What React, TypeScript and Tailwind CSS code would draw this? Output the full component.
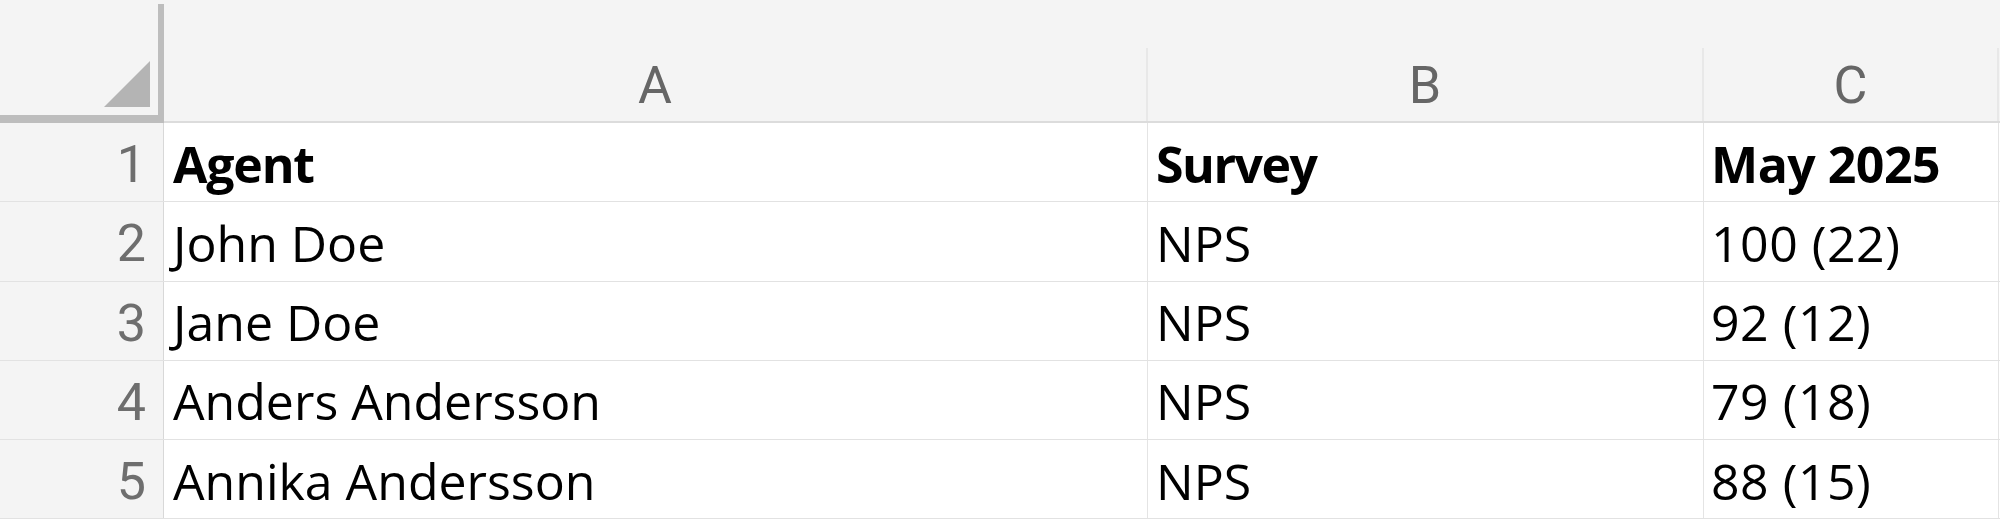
import React from "react";

const rows: [string, string, string, string][] = [
  ["1", "Agent", "Survey", "May 2025"],
  ["2", "John Doe", "NPS", "100 (22)"],
  ["3", "Jane Doe", "NPS", "92 (12)"],
  ["4", "Anders Andersson", "NPS", "79 (18)"],
  ["5", "Annika Andersson", "NPS", "88 (15)"],
];

const cellFont = { fontFamily: "'Open Sans', 'Noto Sans', sans-serif" };
const hdrFont = { fontFamily: "Roboto, 'Noto Sans', sans-serif" };

function ColHeader({ label, w }: { label: string; w: string }) {
  return (
    <div className={`${w} h-full flex flex-col border-b-2 border-[#dcdcdc]`}>
      <div className="h-[48px]" />
      <div
        className="flex-1 flex items-center justify-center border-r-2 border-[#e8e8e8] text-[52px] text-[#666666] leading-none pt-[2px]"
        style={hdrFont}
      >
        {label}
      </div>
    </div>
  );
}

export default function App() {
  return (
    <div className="w-[2000px] h-[521px] bg-white overflow-hidden">
      <div className="flex h-[123px] bg-[#f4f4f4]">
        <div className="w-[164px] h-full pt-[4px]">
          <div className="h-full border-r-[6px] border-b-[8px] border-[#bdbdbd] flex items-end justify-end p-[8px]">
            <svg width="46" height="46" viewBox="0 0 46 46">
              <polygon points="46,0 46,46 0,46" fill="#b4b4b4" />
            </svg>
          </div>
        </div>
        <ColHeader label="A" w="w-[984px]" />
        <ColHeader label="B" w="w-[556px]" />
        <ColHeader label="C" w="w-[295px]" />
        <div className="flex-1 h-full border-b-2 border-[#dcdcdc]" />
      </div>
      {rows.map((r, i) => (
        <div key={i} className="flex h-[79.25px] border-b border-[#e2e2e2]">
          <div
            className="w-[164px] h-full bg-[#f4f4f4] border-r border-[#d8d8d8] flex items-center justify-end pr-[17px] pt-[6px] text-[52px] text-[#6e6e6e]"
            style={hdrFont}
          >
            {r[0]}
          </div>
          <div
            className={`w-[984px] h-full border-r border-[#e4e4e4] flex items-center pl-[9px] pt-[4px] text-[50px] text-black ${i === 0 ? "font-bold tracking-[-1.2px]" : ""}`}
            style={cellFont}
          >
            {r[1]}
          </div>
          <div
            className={`w-[556px] h-full border-r border-[#e4e4e4] flex items-center pl-[8px] pt-[4px] text-[50px] text-black ${i === 0 ? "font-bold tracking-[-1.5px]" : ""}`}
            style={cellFont}
          >
            {r[2]}
          </div>
          <div
            className={`w-[295px] h-full border-r border-[#e4e4e4] flex items-center pl-[7px] pt-[4px] text-[50px] text-black whitespace-nowrap ${i === 0 ? "font-bold tracking-[-0.5px]" : "tracking-[0.5px]"}`}
            style={cellFont}
          >
            {r[3]}
          </div>
          <div className="flex-1 h-full" />
        </div>
      ))}
    </div>
  );
}
